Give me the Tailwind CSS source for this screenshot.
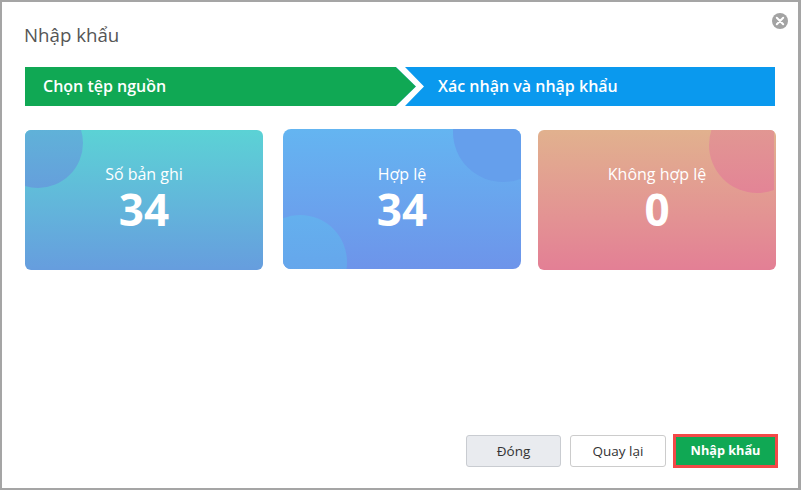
<!DOCTYPE html>
<html lang="en">
<head>
    <meta charset="UTF-8">
    <meta name="viewport" content="width=device-width, initial-scale=1.0">
    <title>Nhập khẩu</title>
    <script src="https://cdn.jsdelivr.net/npm/@tailwindcss/browser@4"></script>
</head>
<body class="bg-white font-['Open_Sans',sans-serif]">
    <div class="relative w-[801px] h-[490px] bg-white border-t-2 border-b-2 border-l-2 border-r-[3px] border-[#a5a5a5] overflow-hidden">
        <button class="absolute top-[11px] right-[10px] w-4 h-4">
            <svg viewBox="0 0 16 16" class="w-4 h-4">
                <circle cx="8" cy="8" r="8" fill="#a3a3a3"/>
                <path d="M4.8 4.8l6.4 6.4M11.2 4.8l-6.4 6.4" stroke="#fff" stroke-width="2" stroke-linecap="round"/>
            </svg>
        </button>

        <h1 class="pl-[22px] pt-[21px] h-[65px] text-[18.7px] leading-6 text-[#555]">Nhập khẩu</h1>

        <div class="relative flex ml-[23px] w-[750px] h-[39px] bg-[#0a99ee] text-white font-semibold text-[16px] leading-[38px]">
            <div class="flex-1 pl-[18px] bg-[#10a854] [clip-path:polygon(0_0,371px_0,391px_50%,371px_100%,0_100%)]">Chọn tệp nguồn</div>
            <div class="w-[359px] pl-[22px] bg-[#0a99ee]">Xác nhận và nhập khẩu</div>
            <svg class="absolute left-[371px] top-0 w-[28px] h-[39px]" viewBox="0 0 28 39">
                <polygon points="0,0 9,0 28,19.5 9,39 0,39 20,19.5" fill="#fff"/>
            </svg>
        </div>

        <div class="flex items-start ml-[23px] mt-[24px] text-white text-center">
            <div class="relative w-[238px] h-[140px] rounded-md overflow-hidden bg-gradient-to-b from-[#5bd2d5] to-[#669dde] mr-[20px]">
                <div class="absolute left-[-32px] top-[-32px] w-[90px] h-[90px] rounded-full bg-gradient-to-b from-[#5cbcd6] to-[#659fdc]"></div>
                <div class="relative pt-[32px] text-base leading-[24px]">Số bản ghi</div>
                <div class="relative font-bold text-[44px] leading-[46px]">34</div>
            </div>
            <div class="relative w-[238px] h-[140px] -mt-px rounded-lg overflow-hidden bg-gradient-to-b from-[#64b5f1] to-[#6d94ea] mr-[17px]">
                <div class="absolute right-[-32px] top-[-47px] w-[100px] h-[100px] rounded-full bg-[#659fec]"></div>
                <div class="absolute left-[-30px] top-[86px] w-[94px] h-[94px] rounded-full bg-gradient-to-b from-[#64b0ee] to-[#669fea]"></div>
                <div class="relative pt-[33px] text-base leading-[24px]">Hợp lệ</div>
                <div class="relative font-bold text-[44px] leading-[46px]">34</div>
            </div>
            <div class="relative w-[238px] h-[140px] rounded-md overflow-hidden bg-gradient-to-b from-[#e1b18e] to-[#e37f95]">
                <div class="absolute right-[2px] top-0 w-[65px] h-[63px] overflow-hidden">
                    <div class="absolute left-0 top-[-33px] w-[96px] h-[96px] rounded-full bg-gradient-to-b from-[#e0a090] to-[#e38496]"></div>
                </div>
                <div class="relative pt-[32px] text-base leading-[24px]">Không hợp lệ</div>
                <div class="relative font-bold text-[44px] leading-[46px]">0</div>
            </div>
        </div>

        <div class="absolute left-[464px] top-[432px] flex items-center text-[13.5px]">
            <button class="w-[95px] h-[32px] mr-[9px] rounded-[3px] border border-[#c9ccd1] bg-[#e9ebef] text-[#333] font-medium">Đóng</button>
            <button class="w-[96px] h-[32px] mr-[7px] rounded-[3px] border border-[#ccc] bg-white text-[#333] font-medium">Quay lại</button>
            <button class="w-[105px] h-[34px] border-[3px] border-[#f44848] bg-[#10a854] text-white font-bold text-[12.7px]">Nhập khẩu</button>
        </div>
    </div>
</body>
</html>
